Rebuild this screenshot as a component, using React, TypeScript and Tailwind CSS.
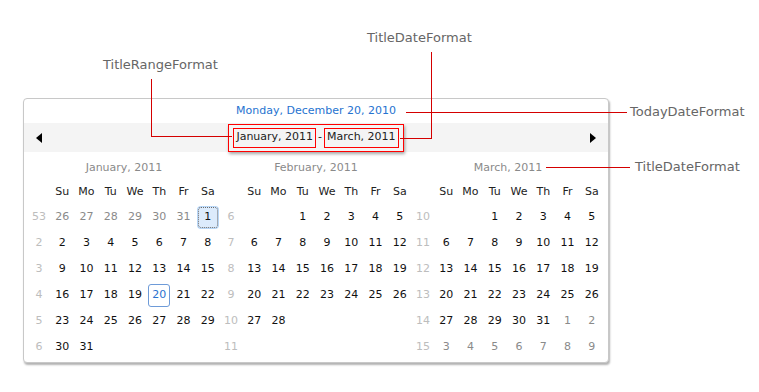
type Kind = "cur" | "other" | "sel" | "today" | "none";
type Cell = { n?: number; k: Kind };
type Week = { wk: number; days: Cell[] };
type Month = { title: string; weeks: Week[] };

const c = (n: number): Cell => ({ n, k: "cur" });
const o = (n: number): Cell => ({ n, k: "other" });
const e: Cell = { k: "none" };

function run(from: number, to: number): Cell[] {
  const out: Cell[] = [];
  for (let i = from; i <= to; i++) out.push(c(i));
  return out;
}

const months: Month[] = [
  {
    title: "January, 2011",
    weeks: [
      { wk: 53, days: [o(26), o(27), o(28), o(29), o(30), o(31), { n: 1, k: "sel" }] },
      { wk: 2, days: run(2, 8) },
      { wk: 3, days: run(9, 15) },
      { wk: 4, days: [...run(16, 19), { n: 20, k: "today" }, c(21), c(22)] },
      { wk: 5, days: run(23, 29) },
      { wk: 6, days: [c(30), c(31), e, e, e, e, e] },
    ],
  },
  {
    title: "February, 2011",
    weeks: [
      { wk: 6, days: [e, e, ...run(1, 5)] },
      { wk: 7, days: run(6, 12) },
      { wk: 8, days: run(13, 19) },
      { wk: 9, days: run(20, 26) },
      { wk: 10, days: [c(27), c(28), e, e, e, e, e] },
      { wk: 11, days: [e, e, e, e, e, e, e] },
    ],
  },
  {
    title: "March, 2011",
    weeks: [
      { wk: 10, days: [e, e, ...run(1, 5)] },
      { wk: 11, days: run(6, 12) },
      { wk: 12, days: run(13, 19) },
      { wk: 13, days: run(20, 26) },
      { wk: 14, days: [...run(27, 31), o(1), o(2)] },
      { wk: 15, days: [o(3), o(4), o(5), o(6), o(7), o(8), o(9)] },
    ],
  },
];

const dayNames = ["Su", "Mo", "Tu", "We", "Th", "Fr", "Sa"];

function DayCell({ cell }: { cell: Cell }) {
  if (cell.k === "none") return <div />;
  if (cell.k === "sel") {
    return (
      <div className="flex items-center justify-center">
        <div className="flex h-[21px] w-[20px] items-center justify-center rounded-[3px] border border-dotted border-[#6b6b6b] bg-[#dcebfc] text-[#111] ring-1 ring-[#b7d6f7]">
          {cell.n}
        </div>
      </div>
    );
  }
  if (cell.k === "today") {
    return (
      <div className="flex items-center justify-center">
        <div className="flex h-[23px] w-[22px] items-center justify-center rounded-[3px] border border-[#6e9bd8] text-[#2a72cf]">
          {cell.n}
        </div>
      </div>
    );
  }
  return (
    <div className={`flex items-center justify-center ${cell.k === "other" ? "text-[#8a8a8a]" : "text-[#111]"}`}>
      {cell.n}
    </div>
  );
}

function MonthView({ month }: { month: Month }) {
  return (
    <div className="w-[192px]">
      <div className="flex h-[24px] items-center justify-center text-[#8a8a8a]">{month.title}</div>
      <div className="grid h-[24px] grid-cols-[22px_repeat(7,1fr)] items-center text-[#222]">
        <div />
        {dayNames.map((d) => (
          <div key={d} className="text-center">
            {d}
          </div>
        ))}
      </div>
      {month.weeks.map((w) => (
        <div key={w.wk} className="grid h-[26px] grid-cols-[22px_repeat(7,1fr)]">
          <div className="flex items-center justify-center text-[#bdbdbd]">{w.wk}</div>
          {w.days.map((d, i) => (
            <DayCell key={i} cell={d} />
          ))}
        </div>
      ))}
    </div>
  );
}

function Arrow({ dir }: { dir: "left" | "right" }) {
  return (
    <svg width="6" height="10" viewBox="0 0 6 10">
      {dir === "left" ? <polygon points="6,0 6,10 0,5" fill="#000" /> : <polygon points="0,0 0,10 6,5" fill="#000" />}
    </svg>
  );
}

function Label({ text, className }: { text: string; className: string }) {
  return <span className={`absolute text-[13px] leading-[16px] text-[#666] ${className}`}>{text}</span>;
}

export default function App() {
  return (
    <div className="relative h-[392px] w-[759px] overflow-hidden bg-white font-['DejaVu_Sans',Verdana,sans-serif] text-[11px]">
      <div className="ml-[23px] mt-[98px] w-[586px] rounded-[4px] border border-[#c8c8c8] bg-white shadow-[1px_2px_2px_rgba(0,0,0,0.3)]">
        <div className="flex h-[24px] items-center justify-center text-[#2673d0]">Monday, December 20, 2010</div>

        <div className="flex h-[29px] items-center justify-between bg-[#f4f4f4] px-[12px]">
          <Arrow dir="left" />
          <div className="flex h-[28px] items-center gap-[1px] border border-[#ff0000] px-[4px] text-[#222] shadow-[1px_2px_3px_rgba(0,0,0,0.35)]">
            <span className="flex h-[20px] items-center border border-[#ff0000] px-[2px]">January, 2011</span>
            <span className="px-[1px]">-</span>
            <span className="flex h-[20px] items-center border border-[#ff0000] px-[2px]">March, 2011</span>
          </div>
          <Arrow dir="right" />
        </div>

        <div className="flex pb-[2px] pl-[4px] pt-[4px]">
          {months.map((m) => (
            <MonthView key={m.title} month={m} />
          ))}
        </div>
      </div>

      {/* annotations */}
      <Label text="TitleRangeFormat" className="left-[103px] top-[57px]" />
      <div className="absolute left-[151px] top-[79px] h-[58px] w-px bg-[#d40000]" />
      <div className="absolute left-[151px] top-[136px] h-px w-[81px] bg-[#d40000]" />

      <Label text="TitleDateFormat" className="left-[367px] top-[30px]" />
      <div className="absolute left-[431px] top-[52px] h-[87px] w-px bg-[#d40000]" />
      <div className="absolute left-[400px] top-[138px] h-px w-[32px] bg-[#d40000]" />

      <div className="absolute left-[406px] top-[112px] h-px w-[221px] bg-[#d40000]" />
      <Label text="TodayDateFormat" className="left-[630px] top-[104px]" />

      <div className="absolute left-[546px] top-[167px] h-px w-[84px] bg-[#d40000]" />
      <Label text="TitleDateFormat" className="left-[635px] top-[159px]" />
    </div>
  );
}
